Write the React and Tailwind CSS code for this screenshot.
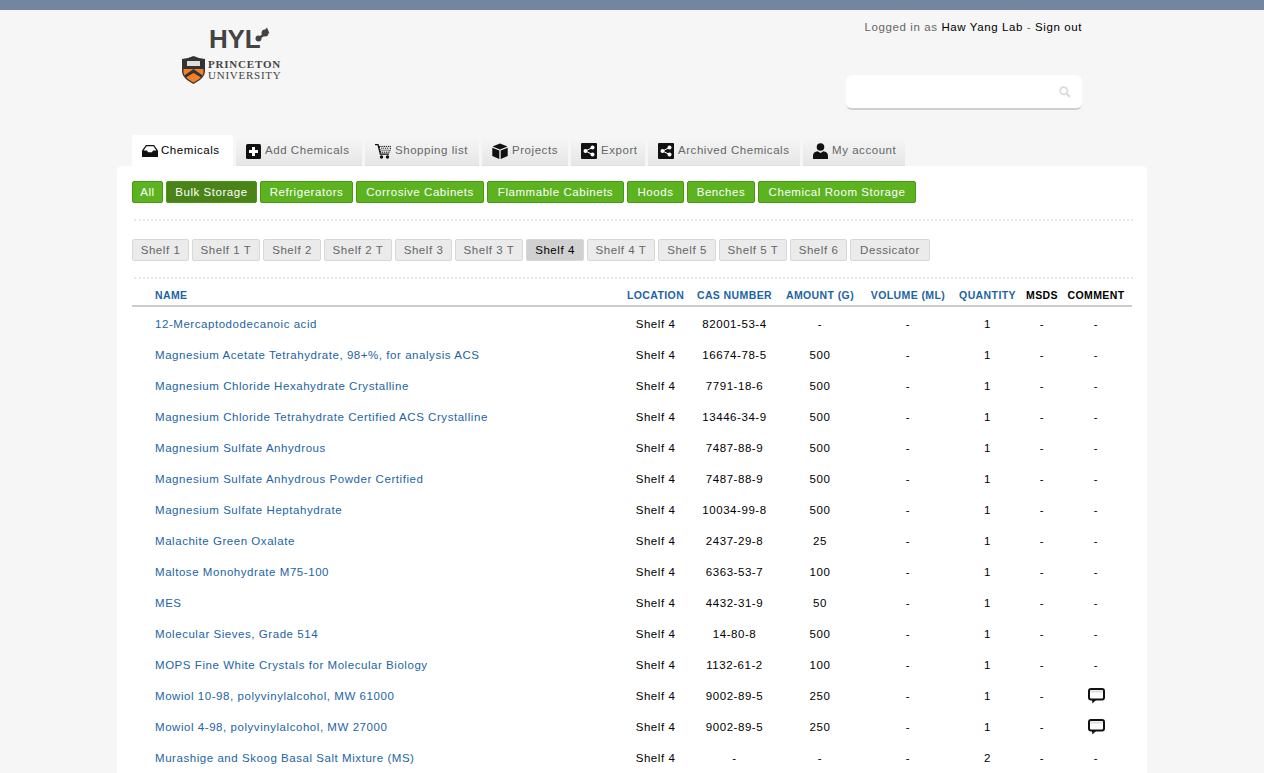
import React from 'react';

const FONT = "font-['Liberation_Sans',Arial,sans-serif]";

const InboxIcon = () => (
  <svg width="16" height="12" viewBox="0 0 16 12" className="shrink-0">
    <path d="M4 0h8l4 5.500V12H0V5.500z" fill="#111" />
    <path d="M4.600 1.200h6.800l3 4.200H11l-1 1.800H6L5 5.400H1.600z" fill="#fff" />
  </svg>
);

const PlusIcon = () => (
  <svg width="15" height="15" viewBox="0 0 15 15" className="shrink-0">
    <rect width="15" height="15" rx="1.500" fill="#111" />
    <path d="M6 3h3v3h3v3H9v3H6V9H3V6h3z" fill="#fff" />
  </svg>
);

const CartIcon = () => (
  <svg width="16" height="15" viewBox="0 0 16 15" className="shrink-0">
    <path d="M0 .6h3l2.400 9.600h8.600" fill="none" stroke="#111" strokeWidth="1.300" />
    <path d="M4.200 2.400H16l-1.600 5.800H5.600z" fill="none" stroke="#111" strokeWidth="1" strokeDasharray="1.400 .8" />
    <path d="M6 4.200h8.200M6.400 6.200h7.400" stroke="#111" strokeWidth=".9" strokeDasharray="1.200 .8" />
    <circle cx="6.500" cy="13" r="1.700" fill="#111" />
    <circle cx="12.500" cy="13" r="1.700" fill="#111" />
  </svg>
);

const BoxIcon = () => (
  <svg width="16" height="16" viewBox="0 0 16 16" className="shrink-0">
    <path d="M8 .5l7.500 3L8 6.400.5 3.500z" fill="#111" />
    <path d="M.3 4.800l7 2.800V16l-7-3zM15.700 4.800l-7 2.800V16l7-3z" fill="#111" />
  </svg>
);

const ShareIcon = () => (
  <svg width="16" height="16" viewBox="0 0 16 16" className="shrink-0">
    <rect width="16" height="16" rx="1" fill="#111" />
    <path d="M4.500 8l7-3.500M4.500 8l7 3.500" stroke="#fff" strokeWidth="1" />
    <circle cx="4.500" cy="8" r="2" fill="#fff" />
    <circle cx="11.500" cy="4.500" r="2" fill="#fff" />
    <circle cx="11.500" cy="11.500" r="2" fill="#fff" />
  </svg>
);

const UserIcon = () => (
  <svg width="15" height="16" viewBox="0 0 15 16" className="shrink-0">
    <circle cx="7.500" cy="4" r="3.800" fill="#111" />
    <path d="M0 16v-3.500C0 10 2 8.600 4.600 8.200L7.500 10l2.900-1.800C13 8.600 15 10 15 12.500V16z" fill="#111" />
  </svg>
);

const CommentIcon = () => (
  <svg width="17" height="16" viewBox="0 0 17 16" className="block">
    <rect x="1" y="1" width="15" height="10.500" rx="2" fill="#fff" stroke="#111" strokeWidth="2" />
    <path d="M2.500 2.500h12v2h-12z" fill="#ddd" />
    <path d="M4 12h4l-3.600 3.600z" fill="#111" />
  </svg>
);

const SearchIcon = () => (
  <svg width="12" height="12" viewBox="0 0 12 12">
    <circle cx="4.800" cy="4.800" r="3.600" fill="none" stroke="#dcdcdc" strokeWidth="1.800" />
    <path d="M7.500 7.500l3.400 3.400" stroke="#dcdcdc" strokeWidth="2.200" />
  </svg>
);

const Logo = () => (
  <div className="ml-[65px] mt-[17px] w-[100px] shrink-0">
    <div className="ml-[27px] flex h-[24px] items-center">
      <span className="font-['Liberation_Sans',sans-serif] text-[26px] leading-none font-bold tracking-[-0.2px] text-[#444]">HYL</span>
      <svg width="15" height="18" viewBox="0 0 15 18" className="-ml-[5px] -mt-[6px]">
        <path d="M4 11l6-4" stroke="#444" strokeWidth="2.500" />
        <circle cx="3.500" cy="11.500" r="3" fill="#444" />
        <circle cx="10" cy="6" r="3.500" fill="#444" />
        <path d="M9 4l3-3.500 2.500 6z" fill="#444" />
      </svg>
    </div>
    <div className="mt-[5px] flex items-start">
      <svg width="23" height="28" viewBox="0 0 23 28" className="shrink-0">
        <path d="M0 3l6-1 5.500-2 5.500 2 6 1v12c0 6-6 10-11.500 13C6 25 0 21 0 15z" fill="#333" />
        <path d="M1.500 13h20v3c0 4-5 8-10 10.500-5-2.500-10-6.500-10-10.500z" fill="#f58025" />
        <path d="M3 19l8.500-6 8.500 6v3l-8.500-5-8.500 5z" fill="#333" />
        <rect x="5" y="5" width="13" height="5" fill="#ddd" />
      </svg>
      <div className="ml-[3px] mt-[3px] font-['Liberation_Serif',serif] text-[#444]">
        <div className="text-[11px] leading-[11px] font-bold tracking-[0.8px]">PRINCETON</div>
        <div className="text-[11px] leading-[10px] tracking-[0.75px]">UNIVERSITY</div>
      </div>
    </div>
  </div>
);

const tabs = [
  { label: 'Chemicals', icon: <InboxIcon />, w: 'w-[101px]', active: true },
  { label: 'Add Chemicals', icon: <PlusIcon />, w: 'w-[126px]' },
  { label: 'Shopping list', icon: <CartIcon />, w: 'w-[114px]' },
  { label: 'Projects', icon: <BoxIcon />, w: 'w-[86px]' },
  { label: 'Export', icon: <ShareIcon />, w: 'w-[74px]' },
  { label: 'Archived Chemicals', icon: <ShareIcon />, w: 'w-[152px]' },
  { label: 'My account', icon: <UserIcon />, w: 'w-[102px]' },
];

const Tab = ({ label, icon, w, active }) => (
  <div
    className={
      active
        ? `${w} flex h-[31px] items-center gap-[3px] rounded-t-[3px] bg-white pl-[10px] text-black`
        : `${w} flex h-[29px] items-center gap-[4px] border-b border-[#e0e0e0] bg-gradient-to-b from-[#f6f6f6] to-[#e6e6e6] pl-[10px] text-[#666]`
    }
  >
    {icon}
    <span>{label}</span>
  </div>
);

const storages = [
  { label: 'All', w: 'w-[31px]' },
  { label: 'Bulk Storage', w: 'w-[91px]', active: true },
  { label: 'Refrigerators', w: 'w-[93px]' },
  { label: 'Corrosive Cabinets', w: 'w-[128px]' },
  { label: 'Flammable Cabinets', w: 'w-[137px]' },
  { label: 'Hoods', w: 'w-[57px]' },
  { label: 'Benches', w: 'w-[68px]' },
  { label: 'Chemical Room Storage', w: 'w-[158px]' },
];

const shelves = [
  { label: 'Shelf 1', w: 'w-[57px]' },
  { label: 'Shelf 1 T', w: 'w-[68px]' },
  { label: 'Shelf 2', w: 'w-[58px]' },
  { label: 'Shelf 2 T', w: 'w-[68px]' },
  { label: 'Shelf 3', w: 'w-[57px]' },
  { label: 'Shelf 3 T', w: 'w-[68px]' },
  { label: 'Shelf 4', w: 'w-[58px]', active: true },
  { label: 'Shelf 4 T', w: 'w-[68px]' },
  { label: 'Shelf 5', w: 'w-[58px]' },
  { label: 'Shelf 5 T', w: 'w-[68px]' },
  { label: 'Shelf 6', w: 'w-[57px]' },
  { label: 'Dessicator', w: 'w-[80px]' },
];

const rows = [
  ['12-Mercaptododecanoic acid', '82001-53-4', '-', 1],
  ['Magnesium Acetate Tetrahydrate, 98+%, for analysis ACS', '16674-78-5', '500', 1],
  ['Magnesium Chloride Hexahydrate Crystalline', '7791-18-6', '500', 1],
  ['Magnesium Chloride Tetrahydrate Certified ACS Crystalline', '13446-34-9', '500', 1],
  ['Magnesium Sulfate Anhydrous', '7487-88-9', '500', 1],
  ['Magnesium Sulfate Anhydrous Powder Certified', '7487-88-9', '500', 1],
  ['Magnesium Sulfate Heptahydrate', '10034-99-8', '500', 1],
  ['Malachite Green Oxalate', '2437-29-8', '25', 1],
  ['Maltose Monohydrate M75-100', '6363-53-7', '100', 1],
  ['MES', '4432-31-9', '50', 1],
  ['Molecular Sieves, Grade 514', '14-80-8', '500', 1],
  ['MOPS Fine White Crystals for Molecular Biology', '1132-61-2', '100', 1],
  ['Mowiol 10-98, polyvinylalcohol, MW 61000', '9002-89-5', '250', 1, true],
  ['Mowiol 4-98, polyvinylalcohol, MW 27000', '9002-89-5', '250', 1, true],
  ['Murashige and Skoog Basal Salt Mixture (MS)', '-', '-', 2],
];

const headers = [
  { label: 'Location', w: 'w-[71px]' },
  { label: 'CAS Number', w: 'w-[87px]' },
  { label: 'Amount (g)', w: 'w-[84px]' },
  { label: 'Volume (mL)', w: 'w-[92px]' },
  { label: 'Quantity', w: 'w-[67px]' },
  { label: 'MSDS', w: 'w-[42px]', plain: true },
  { label: 'Comment', w: 'w-[69px] pr-[3px]', plain: true },
];

const App = () => {
  return (
    <div className={`${FONT} h-[773px] overflow-hidden bg-[#f6f6f6] text-[11.5px] tracking-[0.55px]`}>
      <div className="h-[10px] bg-[#74859f]" />

      <div className="mx-auto w-[1030px]">
        <div className="flex h-[125px] justify-between">
          <Logo />
          <div className="mr-[65px] flex w-[236px] flex-col items-end">
            <div className="mt-[9px] leading-[16px] tracking-[0.6px] text-[#666]">
              Logged in as <span className="text-black">Haw Yang Lab</span> - <span className="text-black">Sign out</span>
            </div>
            <div className="mt-[40px] flex h-[35px] w-[236px] items-center justify-end rounded-[6px] border-b-2 border-[#d0d0d0] bg-white pr-[11px]">
              <SearchIcon />
            </div>
          </div>
        </div>

        <div className="flex items-end gap-[3px] pl-[15px]">
          {tabs.map((t) => (
            <Tab key={t.label} {...t} />
          ))}
        </div>

        <div className="rounded-[5px] bg-white px-[15px] pt-[15px] pb-[20px]">
          <div className="flex gap-[3px]">
            {storages.map((s) => (
              <div
                key={s.label}
                className={`${s.w} flex h-[22px] items-center justify-center rounded-[2px] border border-[#459a12] pt-[1px] text-white ${s.active ? 'bg-[#4a8317]' : 'bg-[#5cb31f]'}`}
              >
                {s.label}
              </div>
            ))}
          </div>

          <div className="mt-[16px] ml-[2px] w-[999px] border-t-2 border-dotted border-[#e8e8e8]" />

          <div className="mt-[18px] flex gap-[3px]">
            {shelves.map((s) => (
              <div
                key={s.label}
                className={`${s.w} flex h-[22px] items-center justify-center rounded-[2px] border border-[#d8d8d8] pt-[1px] ${s.active ? 'bg-[#d0d0d0] text-black' : 'bg-[#ebebeb] text-[#666]'}`}
              >
                {s.label}
              </div>
            ))}
          </div>

          <div className="mt-[16px] ml-[2px] w-[999px] border-t-2 border-dotted border-[#e8e8e8]" />

          <table className="w-[1000px] table-fixed border-collapse">
            <thead>
              <tr className="border-b-2 border-[#ccc] text-[10.5px] font-bold tracking-[0.4px] uppercase">
                <th className="h-[27px] pt-[7px] pl-[23px] text-left text-[#1c64a4]">Name</th>
                {headers.map((h) => (
                  <th key={h.label} className={`${h.w} h-[27px] pt-[7px] text-center ${h.plain ? 'text-black' : 'text-[#1c64a4]'}`}>
                    {h.label}
                  </th>
                ))}
              </tr>
            </thead>
            <tbody>
              {rows.map(([name, cas, amount, qty, hasComment]) => (
                <tr key={name} className="h-[31px] text-center text-black [&>td]:pt-[6px]">
                  <td className="pl-[23px] text-left text-[#1c64a4]">{name}</td>
                  <td>Shelf 4</td>
                  <td>{cas}</td>
                  <td>{amount}</td>
                  <td>-</td>
                  <td>{qty}</td>
                  <td>-</td>
                  <td className="pr-[3px]">
                    {hasComment ? (
                      <div className="flex justify-center pb-[2px]">
                        <CommentIcon />
                      </div>
                    ) : (
                      '-'
                    )}
                  </td>
                </tr>
              ))}
            </tbody>
          </table>
        </div>
      </div>
    </div>
  );
};

export default App;
